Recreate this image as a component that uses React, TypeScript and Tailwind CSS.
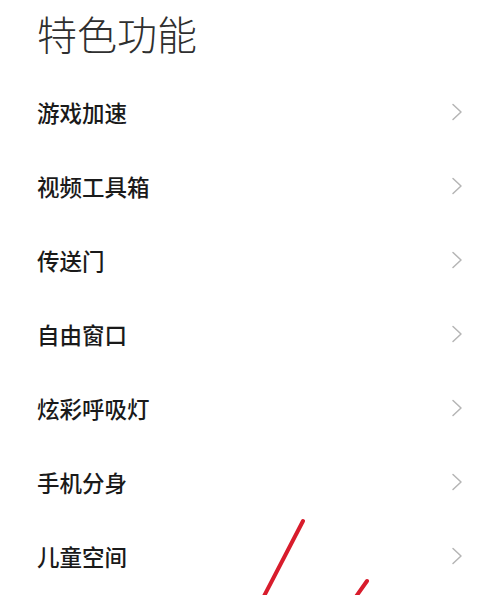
const items = ["游戏加速", "视频工具箱", "传送门", "自由窗口", "炫彩呼吸灯", "手机分身", "儿童空间"];

function Chevron() {
    return (
        <svg width="12" height="18" viewBox="0 0 12 18" fill="none">
            <path d="M2 1.5 L10 9 L2 16.5" stroke="#b5b5b5" strokeWidth="1.5" strokeLinecap="round" strokeLinejoin="round" />
        </svg>
    );
}

export default function App() {
    return (
        <div
            className="relative h-[595px] w-[500px] overflow-hidden bg-white"
            style={{ fontFamily: '"Noto Sans CJK SC", "Noto Sans", sans-serif' }}
        >
            <div className="flex h-[75px] items-start pl-[37px] pt-[8px]">
                <h1 className="text-[40px] font-light leading-[50px] text-[#2f2f2f]">特色功能</h1>
            </div>
            <div className="flex flex-col">
                {items.map((item) => (
                    <div key={item} className="flex h-[74px] items-center justify-between pl-[37px] pr-[37px]">
                        <span className="text-[22.5px] font-medium leading-none text-[#1a1a1a]">{item}</span>
                        <Chevron />
                    </div>
                ))}
            </div>
            <svg className="pointer-events-none absolute left-0 top-0" width="500" height="595" viewBox="0 0 500 595">
                <path d="M303 521 L262 600" stroke="#d81c2c" strokeWidth="4" strokeLinecap="round" />
                <path d="M367 581 L355 598" stroke="#d81c2c" strokeWidth="4" strokeLinecap="round" />
            </svg>
        </div>
    );
}
